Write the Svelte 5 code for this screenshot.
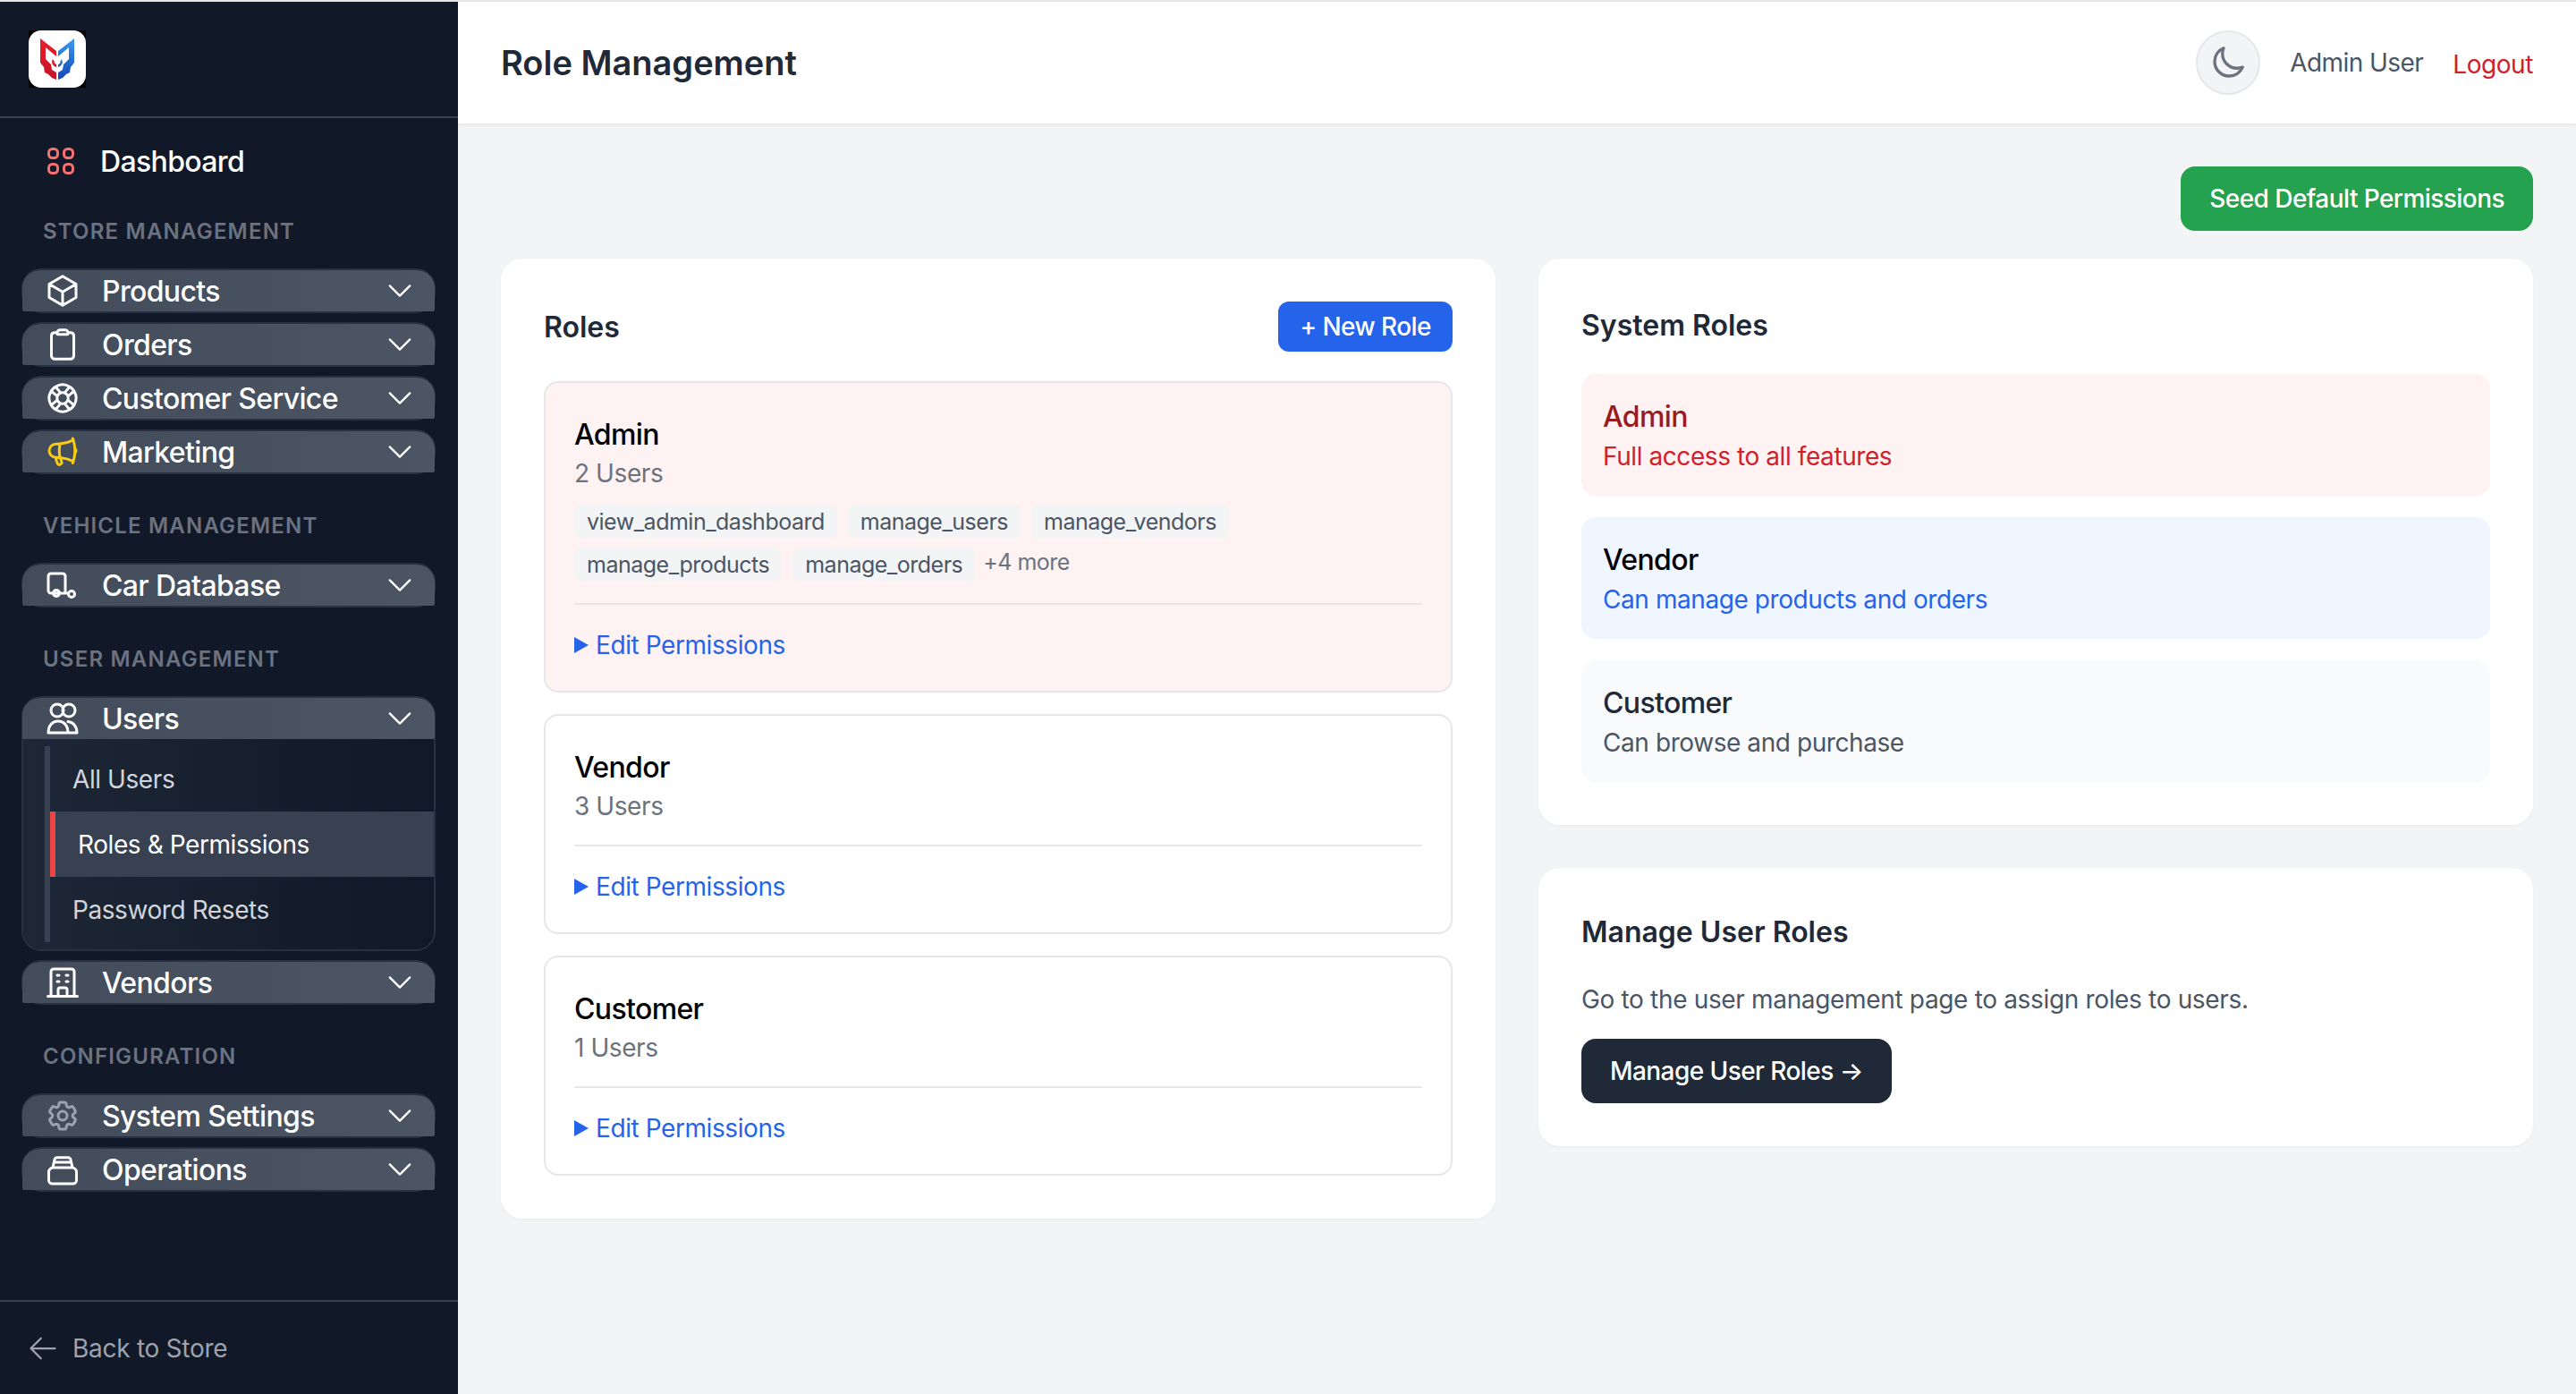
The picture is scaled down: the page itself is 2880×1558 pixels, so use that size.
<script>
  const icons = {
    cube: "m21 7.5-9-5.25L3 7.5m18 0-9 5.25m9-5.25v9l-9 5.25M3 7.5l9 5.25M3 7.5v9l9 5.25m0-9v9",
    clipboard: "M15.666 3.888A2.25 2.25 0 0 0 13.5 2.25h-3c-1.03 0-1.9.693-2.166 1.638m7.332 0c.055.194.084.4.084.612v0a.75.75 0 0 1-.75.75H9a.75.75 0 0 1-.75-.75v0c0-.212.03-.418.084-.612m7.332 0c.646.049 1.288.11 1.927.184 1.1.128 1.907 1.077 1.907 2.185V19.5a2.25 2.25 0 0 1-2.25 2.25H6.75A2.25 2.25 0 0 1 4.5 19.5V6.257c0-1.108.806-2.057 1.907-2.185a48.208 48.208 0 0 1 1.927-.184",
    lifebuoy: "M16.712 4.33a9.027 9.027 0 0 1 1.652 1.306c.51.51.944 1.064 1.306 1.652M16.712 4.33l-3.448 4.138m3.448-4.138a9.014 9.014 0 0 0-9.424 0M19.67 7.288l-4.138 3.448m4.138-3.448a9.014 9.014 0 0 1 0 9.424m-4.138-5.976a3.736 3.736 0 0 0-.88-1.388 3.737 3.737 0 0 0-1.388-.88m2.268 2.268a3.765 3.765 0 0 1 0 2.528m-2.268-4.796a3.765 3.765 0 0 0-2.528 0m4.796 4.796c-.181.506-.475.982-.88 1.388a3.736 3.736 0 0 1-1.388.88m2.268-2.268 4.138 3.448m0 0a9.027 9.027 0 0 1-1.306 1.652c-.51.51-1.064.944-1.652 1.306m0 0-3.448-4.138m3.448 4.138a9.014 9.014 0 0 1-9.424 0m5.976-4.138a3.765 3.765 0 0 1-2.528 0m0 0a3.736 3.736 0 0 1-1.388-.88 3.737 3.737 0 0 1-.88-1.388m2.268 2.268L7.288 19.67m0 0a9.024 9.024 0 0 1-1.652-1.306 9.027 9.027 0 0 1-1.306-1.652m0 0 4.138-3.448M4.33 16.712a9.014 9.014 0 0 1 0-9.424m4.138 5.976a3.765 3.765 0 0 1 0-2.528m0 0c.181-.506.475-.982.88-1.388a3.736 3.736 0 0 1 1.388-.88m-2.268 2.268L4.33 7.288m6.406 1.18L7.288 4.33m0 0a9.024 9.024 0 0 0-1.652 1.306A9.025 9.025 0 0 0 4.33 7.288",
    megaphone: "M10.34 15.84c-.688-.06-1.386-.09-2.09-.09H7.5a4.5 4.5 0 1 1 0-9h.75c.704 0 1.402-.03 2.09-.09m0 9.18c.253.962.584 1.892.985 2.783.247.55.06 1.21-.463 1.511l-.657.38c-.551.318-1.26.117-1.527-.461a20.845 20.845 0 0 1-1.44-4.282m3.102.069a18.03 18.03 0 0 1-.59-4.59c0-1.586.205-3.124.59-4.59m0 9.18a23.848 23.848 0 0 1 8.835 2.535M10.34 6.66a23.847 23.847 0 0 0 8.835-2.535m0 0A23.74 23.74 0 0 0 18.795 3m.38 1.125a23.91 23.91 0 0 1 1.014 5.395m-1.014 8.855c-.118.38-.245.754-.38 1.125m.38-1.125a23.91 23.91 0 0 0 1.014-5.395m0-3.46c.495.413.811 1.035.811 1.73 0 .695-.316 1.317-.811 1.73m0-3.46a24.347 24.347 0 0 1 0 3.46",
    cog: "M9.594 3.94c.09-.542.56-.94 1.11-.94h2.593c.55 0 1.02.398 1.11.94l.213 1.281c.063.374.313.686.645.87.074.04.147.083.22.127.325.196.72.257 1.075.124l1.217-.456a1.125 1.125 0 0 1 1.37.49l1.296 2.247a1.125 1.125 0 0 1-.26 1.431l-1.003.827c-.293.241-.438.613-.43.992a7.723 7.723 0 0 1 0 .255c-.008.378.137.75.43.991l1.004.827c.424.35.534.955.26 1.43l-1.298 2.247a1.125 1.125 0 0 1-1.369.491l-1.217-.456c-.355-.133-.75-.072-1.076.124a6.47 6.47 0 0 1-.22.128c-.331.183-.581.495-.644.869l-.213 1.281c-.09.543-.56.94-1.11.94h-2.594c-.55 0-1.019-.398-1.11-.94l-.213-1.281c-.062-.374-.312-.686-.644-.87a6.52 6.52 0 0 1-.22-.127c-.325-.196-.72-.257-1.076-.124l-1.217.456a1.125 1.125 0 0 1-1.369-.49l-1.297-2.247a1.125 1.125 0 0 1 .26-1.431l1.004-.827c.292-.24.437-.613.43-.991a6.932 6.932 0 0 1 0-.255c.007-.38-.138-.751-.43-.992l-1.004-.827a1.125 1.125 0 0 1-.26-1.43l1.297-2.247a1.125 1.125 0 0 1 1.37-.491l1.216.456c.356.133.751.072 1.076-.124.072-.044.146-.086.22-.128.332-.183.582-.495.644-.869l.214-1.28ZM15 12a3 3 0 1 1-6 0 3 3 0 0 1 6 0Z",
    truck: "M9.5 17.4H4.2a1.8 1.8 0 0 1-1.8-1.8V6a1.8 1.8 0 0 1 1.8-1.8h7.8A1.8 1.8 0 0 1 13.8 6v11.4H9.5m4.3 0h1.7M9.9 17.4a2.1 2.1 0 1 1-4.2 0 2.1 2.1 0 0 1 4.2 0Zm10.2.6a2.1 2.1 0 1 1-4.2 0 2.1 2.1 0 0 1 4.2 0Z",
    users: "M12.6 6.6a4.2 4.2 0 1 1-8.4 0 4.2 4.2 0 0 1 8.4 0Zm7.8 0a4.2 4.2 0 1 1-8.4 0 4.2 4.2 0 0 1 8.4 0ZM2.4 21.6c0-4.8 2.7-7.8 6.6-7.8s6.6 3 6.6 7.8H2.4Zm13.2 0h6c0-4.2-2.4-7.2-6-7.5",
    building: "M2.1 21.3h19.8M4.2 21V4.8A1.8 1.8 0 0 1 6 3h12a1.8 1.8 0 0 1 1.8 1.8V21M8.4 7.2h1.2m4.8 0h1.2M8.4 11.4h1.2m4.8 0h1.2M9 21v-4.2a1.2 1.2 0 0 1 1.2-1.2h3.6a1.2 1.2 0 0 1 1.2 1.2V21",
    stack: "M5.4 10.8l1.2-5.4A1.8 1.8 0 0 1 8.4 4h7.2a1.8 1.8 0 0 1 1.8 1.4l1.2 5.4M6.3 7.2h11.4M5.7 10.8h12.6a3 3 0 0 1 3 3v5.4a2.4 2.4 0 0 1-2.4 2.4H5.1a2.4 2.4 0 0 1-2.4-2.4v-5.4a3 3 0 0 1 3-3Z",
  };

  const sections = [
    { label: "Store Management", items: [
      { name: "Products", icon: "cube" },
      { name: "Orders", icon: "clipboard" },
      { name: "Customer Service", icon: "lifebuoy" },
      { name: "Marketing", icon: "megaphone", tint: "yellow" },
    ]},
    { label: "Vehicle Management", items: [{ name: "Car Database", icon: "truck" }]},
    { label: "User Management", items: [
      { name: "Users", icon: "users", open: true },
      { name: "Vendors", icon: "building" },
    ]},
    { label: "Configuration", items: [
      { name: "System Settings", icon: "cog", tint: "gray" },
      { name: "Operations", icon: "stack" },
    ]},
  ];

  const subLinks = [
    { name: "All Users" },
    { name: "Roles & Permissions", active: true },
    { name: "Password Resets" },
  ];

  const roles = [
    { name: "Admin", users: 2, admin: true },
    { name: "Vendor", users: 3 },
    { name: "Customer", users: 1 },
  ];

  const perms = [
    ["view_admin_dashboard", "manage_users", "manage_vendors"],
    ["manage_products", "manage_orders"],
  ];

  const systemRoles = [
    { name: "Admin", desc: "Full access to all features", kind: "red" },
    { name: "Vendor", desc: "Can manage products and orders", kind: "blue" },
    { name: "Customer", desc: "Can browse and purchase", kind: "plain" },
  ];
</script>

<div class="app">
  <aside class="sidebar">
    <div class="brand">
      <svg class="logo" viewBox="0 0 64 64">
        <defs>
          <linearGradient id="redg" x1="0" y1="0" x2="0" y2="1">
            <stop offset="0" stop-color="#ee1c2a" />
            <stop offset="1" stop-color="#c3142b" />
          </linearGradient>
          <linearGradient id="blueg" x1="0" y1="0" x2="0" y2="1">
            <stop offset="0" stop-color="#3a9cf2" />
            <stop offset="1" stop-color="#1546b8" />
          </linearGradient>
        </defs>
        <rect width="64" height="64" fill="#000" />
        <rect width="64" height="64" rx="14" fill="#fff" />
        <path fill="url(#redg)" d="M13 9 31 23v6L19 19v13l6 6 1 6 5 3v8l-5-2-4-4-4-2-1-6-4-5Z" />
        <path fill="url(#blueg)" d="M51 9 33 23v6l12-10v13l-6 6-1 6-5 3v8l5-2 4-4 4-2 1-6 4-5Z" />
        <path fill="url(#redg)" d="M27 32c-2 3-1 7 4 9v-3c-2-1-3-2-2-3Z" />
        <path fill="url(#blueg)" d="M37 32c2 3 1 7-4 9v-3c2-1 3-2 2-3Z" />
      </svg>
    </div>

    <nav>
      <a class="dash" href="#/">
        <svg class="icon" viewBox="0 0 40 40" fill="none" stroke="#f87171" stroke-width="3">
          <rect x="6.5" y="6.5" width="10" height="10" rx="4" />
          <rect x="23.5" y="6.5" width="10" height="10" rx="4" />
          <rect x="6.5" y="23.5" width="10" height="10" rx="4" />
          <rect x="23.5" y="23.5" width="10" height="10" rx="4" />
        </svg>
        <span>Dashboard</span>
      </a>

      {#each sections as section}
        <h3>{section.label}</h3>
        <div class="groups">
          {#each section.items as item}
            <div class="group">
              <div class="head">
                <svg class="icon {item.tint ?? ''}" viewBox="0 0 24 24" fill="none" stroke="currentColor" stroke-width="1.8" stroke-linecap="round" stroke-linejoin="round">
                  <path d={icons[item.icon]} />
                </svg>
                <span class="name">{item.name}</span>
                <svg class="chev" viewBox="0 0 24 24" fill="none" stroke="currentColor" stroke-width="1.5" stroke-linecap="round" stroke-linejoin="round">
                  <path d="m19.5 8.25-7.5 7.5-7.5-7.5" />
                </svg>
              </div>
              {#if item.open}
                <div class="sub">
                  <div class="rail">
                    {#each subLinks as link}
                      <a href="#/" class="sublink" class:active={link.active}>{link.name}</a>
                    {/each}
                  </div>
                </div>
              {/if}
            </div>
          {/each}
        </div>
      {/each}
    </nav>

    <a class="back" href="#/">
      <svg viewBox="0 0 24 24" fill="none" stroke="currentColor" stroke-width="1.5" stroke-linecap="round" stroke-linejoin="round">
        <path d="M10.5 19.5 3 12m0 0 7.5-7.5M3 12h18" />
      </svg>
      <span>Back to Store</span>
    </a>
  </aside>

  <div class="main">
    <header>
      <h1>Role Management</h1>
      <div class="account">
        <button class="theme" aria-label="Toggle theme">
          <svg viewBox="0 0 24 24" fill="none" stroke="currentColor" stroke-width="2" stroke-linecap="round" stroke-linejoin="round">
            <path d="M21.752 15.002A9.72 9.72 0 0 1 18 15.75c-5.385 0-9.75-4.365-9.75-9.75 0-1.33.266-2.597.748-3.752A9.753 9.753 0 0 0 3 11.25C3 16.635 7.365 21 12.75 21a9.753 9.753 0 0 0 9.002-5.998Z" />
          </svg>
        </button>
        <span class="who">Admin User</span>
        <a class="logout" href="#/">Logout</a>
      </div>
    </header>

    <main>
      <div class="actions">
        <button class="seed">Seed Default Permissions</button>
      </div>

      <div class="columns">
        <section class="card">
          <div class="roles-top">
            <h2>Roles</h2>
            <button class="new-role">+ New Role</button>
          </div>
          <div class="role-list">
            {#each roles as role}
              <div class="role" class:admin={role.admin}>
                <div class="role-name">{role.name}</div>
                <div class="role-users">{role.users} Users</div>
                {#if role.admin}
                  <div class="chips">
                    {#each perms as row, i}
                      <div class="chip-row">
                        {#each row as perm}
                          <span class="chip">{perm}</span>
                        {/each}
                        {#if i === 1}
                          <span class="more">+4 more</span>
                        {/if}
                      </div>
                    {/each}
                  </div>
                {/if}
                <div class="role-foot">
                  <a href="#/" class="edit"><i></i>Edit Permissions</a>
                </div>
              </div>
            {/each}
          </div>
        </section>

        <div class="side">
          <section class="card">
            <h2 class="sys-title">System Roles</h2>
            <div class="sys-list">
              {#each systemRoles as role}
                <div class="sys {role.kind}">
                  <div class="sys-name">{role.name}</div>
                  <div class="sys-desc">{role.desc}</div>
                </div>
              {/each}
            </div>
          </section>

          <section class="card">
            <h2 class="manage-title">Manage User Roles</h2>
            <p>Go to the user management page to assign roles to users.</p>
            <button class="manage">Manage User Roles →</button>
          </section>
        </div>
      </div>
    </main>
  </div>
</div>

<style>
  :global(body) {
    margin: 0;
    background: #f3f4f6;
    font-family: Inter, "Liberation Sans", sans-serif;
  }

  .app {
    display: flex;
    height: 1558px;
    border-top: 2px solid #e5e5e5;
    box-sizing: border-box;
    overflow: hidden;
  }

  a {
    text-decoration: none;
    color: inherit;
  }

  button {
    border: 0;
    font-family: inherit;
    color: #fff;
  }

  /* Sidebar */
  .sidebar {
    width: 512px;
    flex-shrink: 0;
    background: #111827;
    color: #fff;
    display: flex;
    flex-direction: column;
  }

  .brand {
    height: 130px;
    box-sizing: border-box;
    padding: 32px 32px 0;
    border-bottom: 2px solid #374151;
  }

  .logo {
    display: block;
    width: 64px;
    height: 64px;
  }

  nav {
    flex: 1;
    padding: 27px 25px 0 24px;
  }

  .dash {
    display: flex;
    align-items: center;
    height: 42px;
    gap: 24px;
    padding-left: 24px;
    font-size: 32px;
    font-weight: 550;
    letter-spacing: -0.02em;
  }

  .icon {
    width: 40px;
    height: 40px;
    flex-shrink: 0;
    color: #fff;
  }

  .icon.yellow { color: #facc15; }
  .icon.gray { color: #9ca3af; }

  h3 {
    margin: 42px 0 25px;
    padding-left: 24px;
    font-size: 24px;
    line-height: 32px;
    font-weight: 600;
    letter-spacing: 0.05em;
    text-transform: uppercase;
    color: #6b7280;
  }

  .groups {
    display: flex;
    flex-direction: column;
    gap: 10px;
  }

  .group {
    border: 2px solid #283142;
    border-radius: 22px;
    background: #111827;
  }

  .head {
    display: flex;
    align-items: center;
    height: 46px;
    margin: 0 -1px;
    padding: 0 21px 0 25px;
    background: linear-gradient(90deg, #424c5b, #4b5563);
    border-radius: 20px 20px 2px 2px;
  }

  .name {
    flex: 1;
    margin-left: 24px;
    font-size: 32px;
    font-weight: 550;
    letter-spacing: -0.02em;
  }

  .chev {
    width: 36px;
    height: 36px;
    color: #fff;
  }

  .sub {
    background: linear-gradient(90deg, #1d2735, #111827);
    border-radius: 0 0 20px 20px;
    padding: 8px 0;
  }

  .rail {
    margin-left: 24px;
    border-left: 6px solid #374151;
    display: flex;
    flex-direction: column;
  }

  .sublink {
    display: flex;
    align-items: center;
    height: 73px;
    padding-left: 25px;
    font-size: 28px;
    letter-spacing: -0.015em;
    color: #d1d5db;
  }

  .sublink.active {
    border-left: 6px solid #ef4444;
    background: #374151;
    color: #fff;
  }

  .back {
    display: flex;
    align-items: center;
    gap: 15px;
    height: 105px;
    box-sizing: border-box;
    padding-left: 30px;
    border-top: 2px solid #374151;
    color: #9ca3af;
    font-size: 28px;
    letter-spacing: -0.01em;
  }

  .back svg {
    width: 36px;
    height: 36px;
  }

  /* Main */
  .main {
    flex: 1;
    min-width: 0;
  }

  header {
    display: flex;
    align-items: center;
    justify-content: space-between;
    height: 136px;
    padding: 0 48px;
    background: #fff;
    box-shadow: 0 2px 4px rgba(0, 0, 0, 0.05);
  }

  h1 {
    margin: 0;
    font-size: 38px;
    font-weight: 600;
    color: #1f2937;
  }

  .account {
    display: flex;
    align-items: center;
  }

  .theme {
    display: flex;
    align-items: center;
    justify-content: center;
    width: 72px;
    height: 72px;
    padding: 0;
    border: 2px solid #e5e7eb;
    border-radius: 50%;
    background: #f3f4f6;
    color: #6b7280;
  }

  .theme svg {
    width: 40px;
    height: 40px;
  }

  .who {
    margin-left: 33px;
    font-size: 28px;
    letter-spacing: -0.02em;
    color: #4b5563;
  }

  .logout {
    margin-left: 33px;
    padding-top: 4px;
    font-size: 28px;
    letter-spacing: -0.015em;
    color: #d0202c;
  }

  main {
    padding: 48px;
  }

  .actions {
    display: flex;
    justify-content: flex-end;
    margin-bottom: 31px;
  }

  .seed {
    height: 72px;
    padding: 0 32px;
    border-radius: 16px;
    background: #25a24f;
    font-size: 28px;
    font-weight: 500;
    letter-spacing: -0.02em;
  }

  .columns {
    display: grid;
    grid-template-columns: 1fr 1fr;
    gap: 48px;
    align-items: start;
  }

  .side {
    display: flex;
    flex-direction: column;
    gap: 48px;
  }

  .card {
    background: #fff;
    border-radius: 24px;
    padding: 48px;
    box-shadow: 0 1px 3px rgba(0, 0, 0, 0.04);
  }

  h2 {
    margin: 0;
    font-size: 32px;
    font-weight: 600;
    color: #1f2937;
  }

  .roles-top {
    display: flex;
    align-items: center;
    justify-content: space-between;
    margin-bottom: 33px;
  }

  .new-role {
    height: 56px;
    padding: 0 24px;
    border-radius: 12px;
    background: #2563eb;
    font-size: 28px;
    font-weight: 500;
    letter-spacing: -0.02em;
  }

  .role-list {
    display: flex;
    flex-direction: column;
    gap: 24px;
  }

  .role {
    padding: 34px 32px 31px;
    border: 2px solid #e5e7eb;
    border-radius: 16px;
  }

  .role.admin {
    background: #fef2f2;
  }

  .role-name {
    font-size: 32px;
    line-height: 48px;
    font-weight: 500;
    letter-spacing: -0.02em;
    color: #000;
  }

  .role-users {
    font-size: 28px;
    line-height: 38px;
    letter-spacing: -0.015em;
    color: #6b7280;
  }

  .chips {
    display: flex;
    flex-direction: column;
    gap: 10px;
    margin: 16px 0 3px;
  }

  .chip-row {
    display: flex;
    gap: 12px;
  }

  .chip {
    height: 38px;
    line-height: 38px;
    padding: 0 14px;
    border-radius: 8px;
    background: #f3f4f6;
    font-size: 25px;
    letter-spacing: -0.02em;
    color: #4b5563;
  }

  .more {
    margin: -3px 0 0 -3px;
    line-height: 38px;
    font-size: 25px;
    letter-spacing: -0.02em;
    color: #6b7280;
  }

  .role-foot {
    margin-top: 24px;
    padding-top: 25px;
    border-top: 2px solid #e5e7eb;
  }

  .edit {
    display: flex;
    align-items: center;
    height: 40px;
    font-size: 28px;
    letter-spacing: -0.015em;
    color: #2563eb;
  }

  .edit i {
    width: 0;
    height: 0;
    margin-right: 8px;
    border-left: 16px solid #2563eb;
    border-top: 9px solid transparent;
    border-bottom: 9px solid transparent;
  }

  .sys-title {
    line-height: 54px;
    margin-bottom: 27px;
  }

  .sys-list {
    display: flex;
    flex-direction: column;
    gap: 24px;
  }

  .sys {
    padding: 24px;
    border-radius: 16px;
  }

  .sys-name {
    font-size: 32px;
    line-height: 48px;
    font-weight: 500;
    letter-spacing: -0.02em;
  }

  .sys-desc {
    font-size: 28px;
    line-height: 40px;
    letter-spacing: -0.015em;
  }

  .sys.red { background: #fef2f2; }
  .sys.red .sys-name { color: #991b1b; }
  .sys.red .sys-desc { color: #d0202c; }

  .sys.blue { background: #eff6ff; }
  .sys.blue .sys-name { color: #000; }
  .sys.blue .sys-desc { color: #2563eb; }

  .sys.plain { background: #f9fafb; }
  .sys.plain .sys-name { color: #1f2937; }
  .sys.plain .sys-desc { color: #4b5563; }

  .manage-title {
    line-height: 48px;
  }

  .card p {
    margin: 29px 0 22px;
    font-size: 28px;
    line-height: 44px;
    letter-spacing: -0.012em;
    color: #4b5563;
  }

  .manage {
    display: block;
    height: 72px;
    padding: 0 32px;
    border-radius: 16px;
    background: #1f2937;
    font-size: 28px;
    font-weight: 500;
    letter-spacing: -0.02em;
  }
</style>
